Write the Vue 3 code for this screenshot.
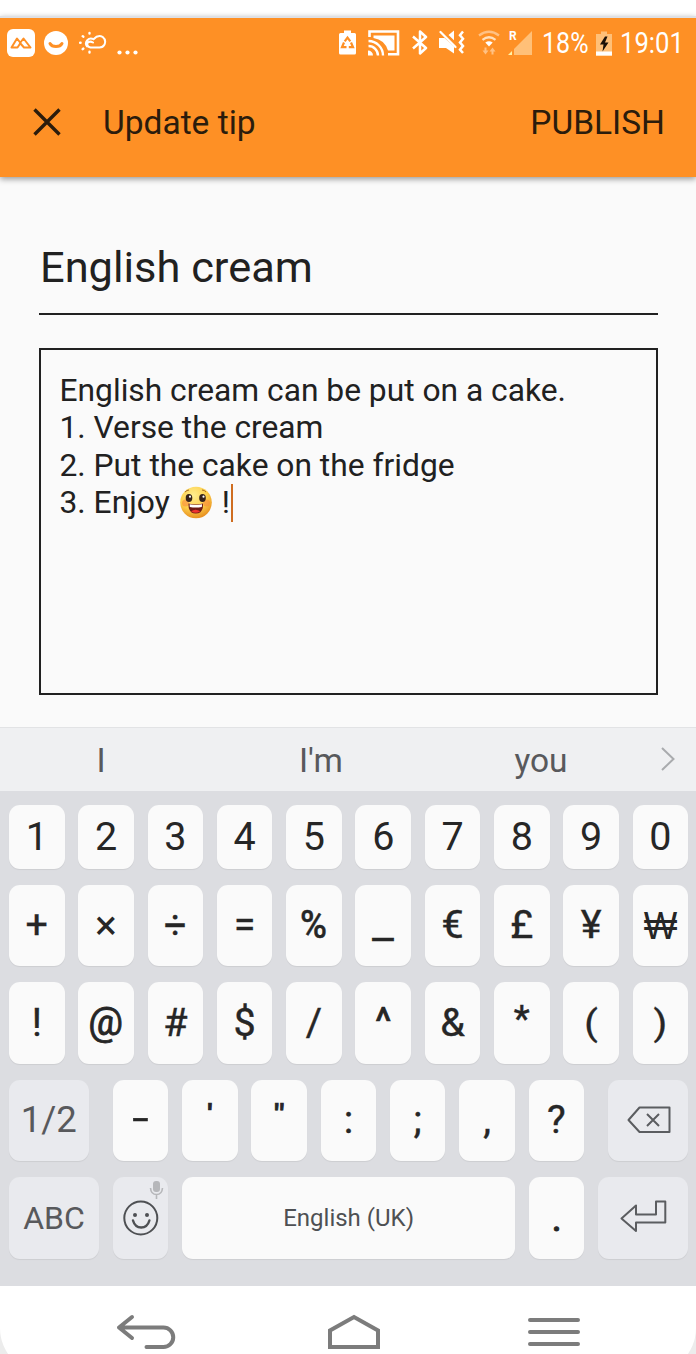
<script setup>
const sym = (t, cls = '') => ({ t, cls })
const numbers = '1234567890'.split('').map((t) => sym(t))
const currency = [
  sym('+', 'op'), sym('×', 'times'), sym('÷', 'op'), sym('=', 'op'), sym('%', 'medium'),
  sym('_', 'under'), sym('€', 'thick'), sym('£', 'thick'), sym('¥', 'thick'), sym('₩', 'won'),
]
const markStyle = { '@': 'at', '#': 'thick', '^': 'caret', '*': 'star', '(': 'paren', ')': 'paren' }
const marks = '!@#$/^&*()'.split('').map((t) => sym(t, markStyle[t] || 'thick'))
const punctuation = [
  sym('-', 'thick dash'), sym("'", 'quote'), sym('"', 'quote'), sym(':', 'thick'),
  sym(';', 'thick'), sym(',', 'thick'), sym('?', 'thick'),
]
const plainRows = [
  { id: 'numbers', keys: numbers, cls: 'short' },
  { id: 'currency', keys: currency, cls: '' },
  { id: 'marks', keys: marks, cls: '' },
]
</script>

<template>
  <div class="screen">
    <header class="appbar">
      <div class="status">
        <svg class="s-app" width="28" height="28" viewBox="0 0 28 28">
          <rect width="28" height="28" rx="6" fill="#fff" />
          <path d="M4.500 18.500 10 9.500l3.500 4.500-3 4.500ZM13 14l3.500-4.500 7 9h-6.500Z" fill="none" stroke="#fe9025" stroke-width="2" stroke-linejoin="round" />
        </svg>
        <svg class="s-smile" width="24" height="24" viewBox="0 0 24 24">
          <circle cx="12" cy="12" r="12" fill="#fff" />
          <path d="M6 12.500a6.500 5 0 0 0 12 0" fill="none" stroke="#fe9025" stroke-width="3" stroke-linecap="round" />
        </svg>
        <svg class="s-weather" width="28" height="24" viewBox="0 0 28 24" fill="none" stroke="#fff" stroke-width="2" stroke-linecap="round">
          <path d="M8 15.500A5 5 0 0 1 14.500 8.200Q19 3.500 23.500 5.800 27.500 9 25.500 13.500 24 16.500 20.500 16.500H11.500Q7.500 15.500 8.500 12 10.500 9.500 14 11.500" />
          <path d="M10.500 2v.6M3.700 5.200l.6.5M1 11.700h.6M3.700 18.200l.6-.6M10.500 21.500v-.8" stroke-width="2.400" />
        </svg>
        <svg class="s-more" width="22" height="5" viewBox="0 0 22 5" fill="#fff">
          <circle cx="2.500" cy="2.500" r="2.100" /><circle cx="10.500" cy="2.500" r="2.100" /><circle cx="18.500" cy="2.500" r="2.100" />
        </svg>
        <span class="grow"></span>
        <svg class="s-saver" width="17" height="25" viewBox="0 0 17 25">
          <path d="M1.500 3H5V.5h7V3h3.500q1.500 0 1.500 1.500v18.500q0 1.500-1.500 1.500h-14Q0 24.500 0 23V4.500Q0 3 1.500 3Z" fill="#fff" />
          <path d="M5.700 11.300 8.500 7.500l2.800 3.800M12 12.500l2 4.700H9.800M5 12.500 3 17.200h4.500" fill="none" stroke="#fe9025" stroke-width="2.200" />
        </svg>
        <svg class="s-cast" width="32" height="26" viewBox="0 0 32 26">
          <path d="M1.500 7V1.500h28.500v22.800H20" fill="none" stroke="#fff" stroke-width="2.600" />
          <path d="M5.500 5.500h21v15h-6.500A18 18 0 0 0 5.500 8Z" fill="#fff" />
          <path d="M.5 11A14.500 14.500 0 0 1 15 25.500M.5 16A9.500 9.500 0 0 1 10 25.500" fill="none" stroke="#fff" stroke-width="2.400" />
          <path d="M0 20.500a5 5 0 0 1 5 5H0Z" fill="#fff" />
        </svg>
        <svg class="s-bt" width="16" height="25" viewBox="0 0 16 25">
          <path d="m1 6.500 13 11.500-6 5.500v-22l6 5.500L1 18.500" fill="none" stroke="#fff" stroke-width="2.500" stroke-linejoin="round" />
        </svg>
        <svg class="s-mute" width="26" height="25" viewBox="0 0 26 25">
          <path d="M0 8h5.500l9.500 8.500v7L7 18H0Zm9.500-3L15 .5v9.800Z" fill="#fff" />
          <path d="m1.500 2 15 15" stroke="#fff" stroke-width="2.200" stroke-linecap="round" />
          <path d="m24 1.500-3 3.700 3 3.500-3 3.700 3 3.500-3 3.700 3 3.400" fill="none" stroke="#fff" stroke-width="2.500" />
        </svg>
        <svg class="s-wifi" width="22" height="25" viewBox="0 0 22 25" fill="none" stroke-width="2.300">
          <path d="M1 5.500q10-7.500 20 0" stroke="#ffc184" />
          <path d="M4.500 9.800q6.500-5 13 0" stroke="#ffe0bd" />
          <path d="m7.300 12.500q3.700-2.300 7.400 0L11 16.500Z" fill="#fff" />
          <path d="M6.500 17.500h2v3h2l-3 4-3-4h2ZM13.500 24.500h2v-3h2l-3-4-3 4h2Z" fill="#ffc184" />
        </svg>
        <svg class="s-signal" width="25" height="26" viewBox="0 0 25 26">
          <path d="M24 1v24H6V19Z" fill="#ffc078" />
          <path d="M0 25h4v-4Z" fill="#fff3a5" />
          <text x="1" y="10" class="roam">R</text>
        </svg>
        <span class="s-pct">18%</span>
        <svg class="s-batt" width="16" height="25" viewBox="0 0 16 25">
          <path d="M0 3h5V.5h6V3h5v22H0Z" fill="#ffc078" />
          <path d="M0 20.500h16v4H0Z" fill="#fff" />
          <path d="M9 5.500 4 13.500h3.500L6.500 20.500l6-9H9l2.500-6Z" fill="#1d1208" />
        </svg>
        <span class="s-time">19:01</span>
      </div>
      <div class="toolbar">
        <svg class="close" width="28" height="28" viewBox="0 0 28 28">
          <path d="m1.500 1.500 25 25m0-25-25 25" stroke="#2b1c0c" stroke-width="3.400" />
        </svg>
        <span class="title">Update tip</span>
        <span class="grow"></span>
        <span class="publish">PUBLISH</span>
      </div>
    </header>

    <main class="form">
      <div class="name">English cream</div>
      <div class="body">
        <div>English cream can be put on a cake.</div>
        <div>1. Verse the cream</div>
        <div>2. Put the cake on the fridge</div>
        <div class="last">
          <span>3. Enjoy</span>
          <svg class="emoji" width="32" height="33" viewBox="0 0 32 33">
            <defs>
              <radialGradient id="face" cx="42%" cy="28%" r="72%">
                <stop offset="0" stop-color="#ffee90" />
                <stop offset=".6" stop-color="#fdcf4a" />
                <stop offset="1" stop-color="#e89020" />
              </radialGradient>
            </defs>
            <circle cx="16" cy="16.500" r="15.800" fill="url(#face)" />
            <circle cx="5.500" cy="17" r="3.500" fill="#f88a3c" opacity=".6" />
            <circle cx="26.500" cy="17" r="3.500" fill="#f88a3c" opacity=".6" />
            <ellipse cx="9" cy="12" rx="3.300" ry="3.900" fill="#35221a" />
            <ellipse cx="22.500" cy="12" rx="3.300" ry="3.900" fill="#35221a" />
            <circle cx="10" cy="10.700" r="1.100" fill="#fff" /><circle cx="23.500" cy="10.700" r="1.100" fill="#fff" />
            <path d="M5 6q2-2 4-2M22 4q2.500 0 4 2" stroke="#a66a22" fill="none" />
            <path d="M8.500 17.500q7.500 2 14.500 0 .5 10-7.200 10T8.500 17.500Z" fill="#6d1a14" />
            <path d="M9.600 18.200q6.300 1.500 12.500 0l-.3 2.800q-6.200 1-12 0Z" fill="#fff" />
            <path d="M11 25.300q4.500-3 9.300 0-4.500 3-9.300 0Z" fill="#f0322f" />
          </svg>
          <span>!</span><i class="cursor"></i>
        </div>
      </div>
    </main>

    <section class="suggest">
      <span>I</span><span>I'm</span><span>you</span>
      <svg width="14" height="24" viewBox="0 0 14 24"><path d="m1 1 11.500 11L1 23" fill="none" stroke="#a9abae" stroke-width="2" /></svg>
    </section>

    <section class="keyboard">
      <div v-for="row in plainRows" :key="row.id" class="row" :class="row.cls">
        <div v-for="k in row.keys" :key="k.t" class="key"><span :class="k.cls">{{ k.t }}</span></div>
      </div>
      <div class="row">
        <div class="key fn page">1/2</div>
        <div v-for="k in punctuation" :key="k.t" class="key"><span :class="k.cls">{{ k.t }}</span></div>
        <div class="key fn del">
          <svg width="44" height="28" viewBox="0 0 44 28" fill="none" stroke="#5b5d60" stroke-width="2" stroke-linejoin="round">
            <path d="M12.500 1.500h30V26h-30L1.500 14Z" /><path d="m20 8 12 12m0-12L20 20" />
          </svg>
        </div>
      </div>
      <div class="row">
        <div class="key fn abc">ABC</div>
        <div class="key fn face">
          <svg width="56" height="82" viewBox="0 0 56 82" fill="none" stroke="#4e5053" stroke-width="2">
            <circle cx="27.800" cy="41" r="16.500" />
            <path d="M20 43.500q2 7 8.200 7t8.200-7" stroke-linecap="round" stroke-width="2.400" />
            <circle cx="22" cy="38" r="2" fill="#4e5053" stroke="none" /><circle cx="34" cy="38" r="2" fill="#4e5053" stroke="none" />
            <rect x="40" y="4" width="7" height="11" rx="3" fill="#b6b7ba" stroke="none" />
            <path d="M37.500 11q.5 6.500 6 6.500t6-6.500M43.500 17.500V22" stroke="#b6b7ba" stroke-width="1.600" />
          </svg>
        </div>
        <div class="key space">English (UK)</div>
        <div class="key"><span class="dot">.</span></div>
        <div class="key fn enter">
          <svg width="48" height="34" viewBox="0 0 48 34" fill="none" stroke="#5b5d60" stroke-width="2" stroke-linejoin="round">
            <path d="M2.500 19.500 17 6.500V15.500H37V2.500h9.300V23.500H17v8.500Z" />
          </svg>
        </div>
      </div>
    </section>

    <nav class="nav">
      <svg width="696" height="68" viewBox="0 0 696 68" fill="none" stroke="#7c7c7c" stroke-width="4">
        <path d="M132 31 119 41.500 132 52M119 41.500h44.500a9.700 9.700 0 0 1 0 19.500H146.500" stroke-linecap="round" stroke-linejoin="round" />
        <path d="M330 61V44.500L354 31l24 13.500V61Z" />
        <path d="M530 34h48M530 46h48M530 58h48" stroke-linecap="round" />
      </svg>
    </nav>
  </div>
</template>

<style>
body { background: #fff; }
</style>

<style scoped>
* { box-sizing: border-box; }
.screen { width: 696px; height: 1354px; padding-top: 16px; overflow: hidden; display: flex; flex-direction: column; font-family: Roboto, sans-serif; color: #212121; background: #fff; }
.grow { flex: 1; }
svg { display: block; flex: none; }
.appbar { height: 161px; flex: none; background: #fe9025; border-top: 2px solid #dfe0e4; box-shadow: 0 2px 6px rgba(0, 0, 0, .4); z-index: 1; }
.status { height: 50px; display: flex; align-items: center; padding: 0 11px 0 7px; color: #fff; font-size: 29.500px; line-height: 34px; white-space: nowrap; }
.s-smile { margin-left: 9px; }
.s-weather { margin-left: 11px; }
.s-more { margin: 18px 0 0 10px; }
.s-saver { margin-top: -1px; }
.s-cast { margin: -1px 0 0 12px; }
.s-bt { margin: -1px 0 0 12px; }
.s-mute { margin: -1px 0 0 11px; }
.s-wifi { margin: -1px 0 0 13px; }
.s-signal { margin: -1px 0 0 8px; }
.roam { font: 700 12px Roboto, sans-serif; fill: #fff; }
.s-pct { width: 47px; margin-left: 9px; transform: scaleX(.85); transform-origin: 0 50%; }
.s-batt { margin-left: 7px; }
.s-time { width: 65px; margin-left: 8px; transform: scaleX(.87); transform-origin: 0 50%; }
.toolbar { height: 109px; display: flex; align-items: center; padding: 0 31px 0 33px; font-size: 33.500px; color: #2b1c0c; }
.close { margin-top: -2px; }
.title { margin-left: 42px; }
.form { height: 550px; flex: none; background: #fafafa; padding: 62px 38px 0 39px; }
.name { height: 76px; border-bottom: 2px solid #212121; font-size: 43.400px; line-height: 58px; padding-left: 1px; }
.body { height: 347px; margin-top: 33px; border: 2px solid #212121; padding: 22px 0 0 18.500px; font-size: 31.750px; line-height: 37.300px; white-space: nowrap; }
.last { display: flex; align-items: center; }
.emoji { margin: 0 10px 0 10px; }
.cursor { width: 2px; height: 38px; margin-left: 1px; background: #cf6d20; }
.suggest { height: 64px; flex: none; display: flex; align-items: center; background: #eff0f2; border-top: 1px solid #e2e3e5; padding: 1px 0 0; font-size: 33.500px; color: #58595c; }
.suggest span { width: 202px; text-align: center; flex: none; }
.suggest span:nth-child(2) { width: 238px; }
.suggest svg { margin: -2px 0 0 19px; }
.keyboard { height: 495px; flex: none; background: #dcdde1; padding: 13.500px 7.700px 0 9px; display: flex; flex-direction: column; gap: 16px; }
.row { display: flex; gap: 13.800px; height: 81.500px; flex: none; }
.row.short { height: 64px; }
.key { width: 55.500px; flex: none; display: flex; align-items: center; justify-content: center; background: #fafafa; border-radius: 11px; box-shadow: 0 1px 1px rgba(0, 0, 0, .07); font-size: 39.500px; line-height: 44px; color: #262626; white-space: nowrap; }
.key span { display: block; }
.thick { -webkit-text-stroke: .4px currentColor; }
.op { -webkit-text-stroke: .3px currentColor; }
.times { font-size: 41px; }
.medium { font-weight: 500; -webkit-text-stroke: .4px currentColor; transform: scaleX(.93); }
.under { -webkit-text-stroke: .6px currentColor; transform: scaleX(1.2); }
.won { font-family: "Liberation Sans", sans-serif; transform: scaleX(.9); }
.at { -webkit-text-stroke: .8px currentColor; transform: translateY(-1px) scaleX(.98); }
.caret { -webkit-text-stroke: .7px currentColor; transform: translateY(-1px); }
.star { -webkit-text-stroke: .5px currentColor; font-size: 37px; transform: translateY(-4px); }
.paren { -webkit-text-stroke: .4px currentColor; transform: scaleY(.9); }
.quote { -webkit-text-stroke: .9px currentColor; transform: translateY(-5px) scaleY(.75); }
.dash { transform: translateY(-2px) scaleX(1.5); }
.fn { background: #e9eaee; color: #58595c; }
.page { width: 79.500px; margin-right: 10.500px; font-size: 36.500px; }
.del { width: 79.500px; margin-left: 10.500px; }
.del svg { margin-left: 2px; }
.abc { width: 90px; font-size: 32px; }
.space { width: 333px; font-size: 24px; color: #4e5053; }
.dot { -webkit-text-stroke: 1px currentColor; padding-top: 1px; }
.enter { width: 90px; }
.enter svg { margin-top: -4px; }
.nav { position: relative; height: 68px; flex: none; background: #ececec; overflow: hidden; }
.nav::before { content: ''; position: absolute; left: 0; right: 0; top: 0; height: 88px; border-radius: 0 0 46px 46px; background: #fff; }
.nav svg { position: relative; }
</style>
